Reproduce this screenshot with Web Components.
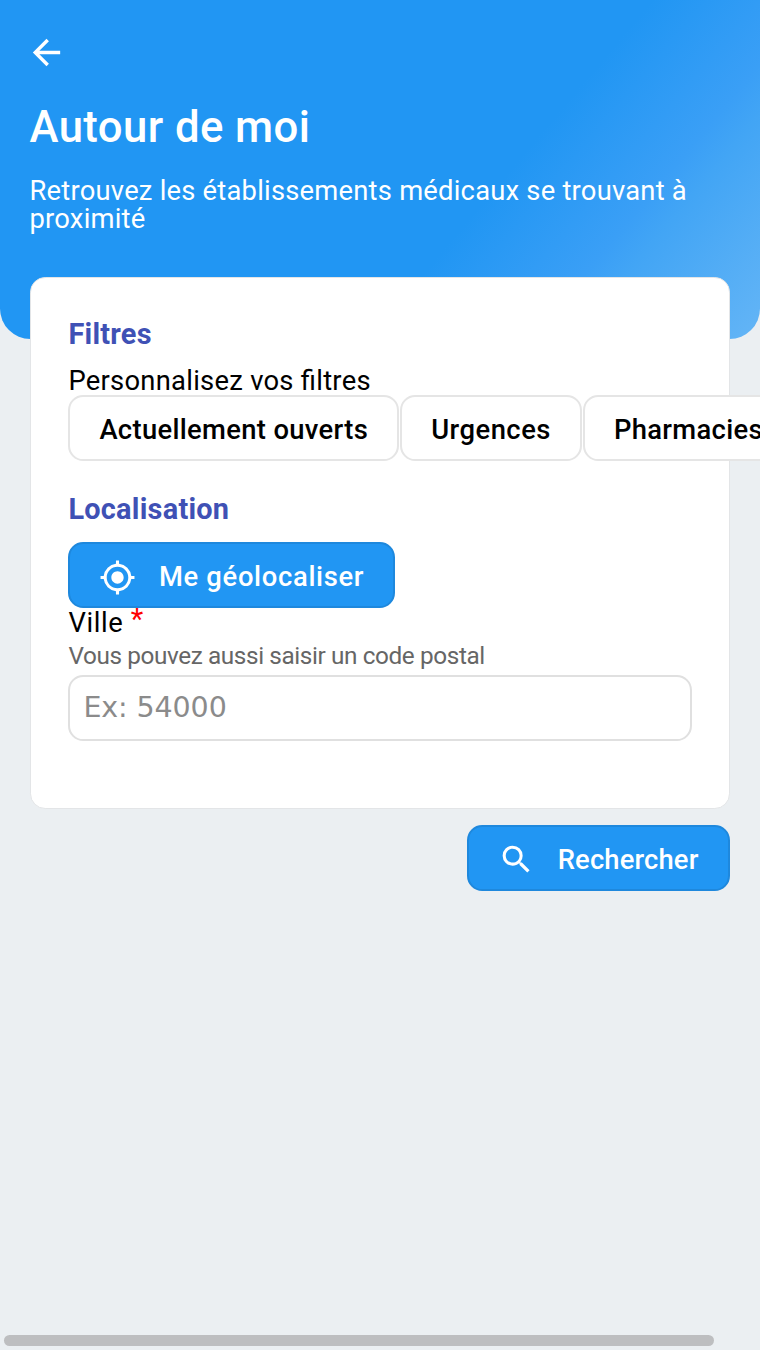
<!DOCTYPE html>
<html lang="fr">
<head>
<meta charset="utf-8">
<title>Autour de moi</title>
<style>
html,body{margin:0;height:100%;overflow:hidden;background:#ebeff2;font-family:Roboto,"Liberation Sans",sans-serif}
</style>
</head>
<body>
<nearby-page></nearby-page>
<script>
const define=(name,html)=>customElements.define(name,class extends HTMLElement{
  constructor(){super();const t=document.createElement('template');t.innerHTML=html;
    this.attachShadow({mode:'open'}).appendChild(t.content.cloneNode(true));}
});

define('page-header',`<style>
:host{display:block;box-sizing:border-box;height:339px;padding:31.5px 30px 0 29.5px;color:#fff;border-radius:0 0 30.4px 30.4px;
 background:linear-gradient(130deg,#2196f3 62.5%,#3a9ff6 78%,#42a5f5 82%,#64b5f6)}
svg{display:block;width:41px;height:41px;margin-left:-4px;fill:#fff}
h1{margin:28px 0 0;font-size:43.7px;line-height:52px;font-weight:500;letter-spacing:.42px}
p{margin:24.5px 0 0;font-size:27.36px;line-height:28px;letter-spacing:.22px}
</style>
<svg viewBox="0 0 24 24"><path d="M20 11H7.83l5.59-5.59L12 4l-8 8 8 8 1.41-1.41L7.83 13H20v-2z"/></svg>
<h1><slot name="title"></slot></h1><p><slot></slot></p>`);

define('content-card',`<style>
:host{display:block;box-sizing:border-box;height:531.5px;margin:-62px 30px 0;padding:38px 37px 0 37.4px;background:#fff;border:1.9px solid #e3e5e7;border-radius:15.2px}
</style><slot></slot>`);

define('section-title',`<style>
:host{display:block;height:36px;line-height:36px;font-size:28.88px;font-weight:700;color:#3f51b5;letter-spacing:.25px}
</style><slot></slot>`);

define('app-button',`<style>
:host{display:inline-flex;box-sizing:border-box;align-items:center;height:66px;padding:4px 29px 0 29px;border:2px solid #e5e5e5;border-radius:15.2px;background:#fff;color:#000;
 font-size:27.36px;font-weight:500;letter-spacing:var(--track,.34px);white-space:nowrap;flex:none}
:host([primary]){background:#2196f3;border-color:#1e88dd;color:#fff}
</style><slot name="icon"></slot><slot></slot>`);

define('app-icon',`<style>
:host{display:block;width:37px;height:37px;margin:0 22.5px 0 0}
svg{display:none;width:37px;height:37px;fill:#fff}
:host([name=locate]) .locate,:host([name=search]) .search{display:block}
</style>
<svg class="locate" viewBox="0 0 24 24"><path d="M12 8c-2.21 0-4 1.79-4 4s1.79 4 4 4 4-1.79 4-4-1.79-4-4-4zm8.94 3A8.994 8.994 0 0 0 13 3.06V1h-2v2.06A8.994 8.994 0 0 0 3.06 11H1v2h2.06A8.994 8.994 0 0 0 11 20.94V23h2v-2.06A8.994 8.994 0 0 0 20.94 13H23v-2h-2.06zM12 19c-3.87 0-7-3.13-7-7s3.13-7 7-7 7 3.13 7 7-3.13 7-7 7z"/></svg>
<svg class="search" viewBox="0 0 24 24"><path d="M15.5 14h-.79l-.28-.27A6.471 6.471 0 0 0 16 9.5 6.5 6.5 0 1 0 9.5 16c1.61 0 3.09-.59 4.23-1.57l.27.28v.79l5 4.99L20.49 19l-4.99-5zm-6 0C7.01 14 5 11.99 5 9.5S7.01 5 9.5 5 14 7.01 14 9.5 11.99 14 9.5 14z"/></svg>`);

define('city-field',`<style>
:host{display:block}
label{display:block;font-size:27.36px;line-height:28px;height:33px;padding-top:.6px;letter-spacing:.6px}
b{color:red;font-weight:400;font-size:29px;line-height:0;position:relative;top:-3px}
small{display:block;font-size:24.32px;line-height:28px;height:33.4px;letter-spacing:-.39px;color:#666}
input{display:block;box-sizing:border-box;width:100%;height:66px;padding:0 13px;border:2px solid #e0e0e0;border-radius:15.2px;background:#fff;font:28.5px "DejaVu Sans",sans-serif;letter-spacing:-.1px}
input::placeholder{color:#8b8b8b;opacity:1}
</style><label for="city">Ville <b>*</b></label><small>Vous pouvez aussi saisir un code postal</small><input id="city" placeholder="Ex: 54000">`);

define('nearby-page',`<style>
:host{display:flex;flex-direction:column;height:1350px;width:760px;overflow:hidden}
.desc{font-size:27.36px;line-height:28px;height:27.5px;letter-spacing:.27px;font-feature-settings:"liga" 1;margin-top:15px;color:#000}
.chips{display:flex;gap:1px;width:max-content}
.chips .u{--track:.5px}
.loc{margin-top:30.5px}
.geo{margin-top:15px;display:flex;--track:.69px}
.actions{display:flex;justify-content:flex-end;margin:16.5px 30px 0;--track:.15px}
.actions app-button{padding:3px 29.5px 0}
.bar{width:710.5px;height:11px;margin:auto 0 4px 3.5px;border-radius:6px;background:#bdbec0}
</style>
<page-header><span slot="title">Autour de moi</span>Retrouvez les établissements médicaux se trouvant à proximité</page-header>
<content-card>
<section-title>Filtres</section-title>
<div class="desc">Personnalisez vos filtres</div>
<div class="chips"><app-button>Actuellement ouverts</app-button><app-button class="u">Urgences</app-button><app-button>Pharmacies</app-button></div>
<section-title class="loc">Localisation</section-title>
<div class="geo"><app-button primary><app-icon slot="icon" name="locate"></app-icon>Me géolocaliser</app-button></div>
<city-field></city-field>
</content-card>
<div class="actions"><app-button primary><app-icon slot="icon" name="search"></app-icon>Rechercher</app-button></div>
<div class="bar"></div>`);
</script>
</body>
</html>
